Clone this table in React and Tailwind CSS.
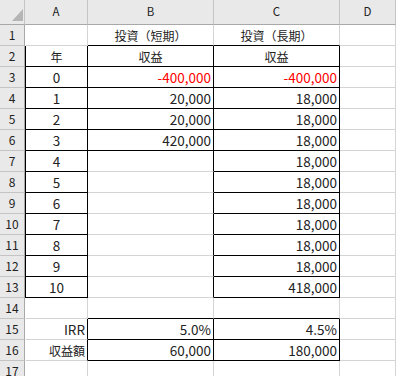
const GRID = "border-[#d4d4d4]";

// each row: [A, B, C]; a cell is { t, al, red, r, b, l, jp }
const rows = [
  [{}, { t: "投資（短期）", al: "c", b: 1, jp: 1 }, { t: "投資（長期）", al: "c", b: 1, jp: 1 }],
  [{ t: "年", al: "c", l: 1, r: 1, b: 1, jp: 1 }, { t: "収益", al: "c", r: 1, b: 1, jp: 1 }, { t: "収益", al: "c", r: 1, b: 1, jp: 1 }],
  [{ t: "0", al: "c", l: 1, r: 1, b: 1 }, { t: "-400,000", red: 1, r: 1, b: 1 }, { t: "-400,000", red: 1, r: 1, b: 1 }],
  [{ t: "1", al: "c", l: 1, r: 1, b: 1 }, { t: "20,000", r: 1, b: 1 }, { t: "18,000", r: 1, b: 1 }],
  [{ t: "2", al: "c", l: 1, r: 1, b: 1 }, { t: "20,000", r: 1, b: 1 }, { t: "18,000", r: 1, b: 1 }],
  [{ t: "3", al: "c", l: 1, r: 1, b: 1 }, { t: "420,000", r: 1, b: 1 }, { t: "18,000", r: 1, b: 1 }],
  [{ t: "4", al: "c", l: 1, r: 1, b: 1 }, { r: 1 }, { t: "18,000", r: 1, b: 1 }],
  [{ t: "5", al: "c", l: 1, r: 1, b: 1 }, { r: 1 }, { t: "18,000", r: 1, b: 1 }],
  [{ t: "6", al: "c", l: 1, r: 1, b: 1 }, { r: 1 }, { t: "18,000", r: 1, b: 1 }],
  [{ t: "7", al: "c", l: 1, r: 1, b: 1 }, { r: 1 }, { t: "18,000", r: 1, b: 1 }],
  [{ t: "8", al: "c", l: 1, r: 1, b: 1 }, { r: 1 }, { t: "18,000", r: 1, b: 1 }],
  [{ t: "9", al: "c", l: 1, r: 1, b: 1 }, { r: 1 }, { t: "18,000", r: 1, b: 1 }],
  [{ t: "10", al: "c", l: 1, r: 1, b: 1 }, { r: 1 }, { t: "418,000", r: 1, b: 1 }],
  [{}, { b: 1 }, { b: 1 }],
  [{ t: "IRR", r: 1 }, { t: "5.0%", r: 1, b: 1 }, { t: "4.5%", r: 1, b: 1 }],
  [{ t: "収益額", r: 1, jp: 1 }, { t: "60,000", r: 1, b: 1 }, { t: "180,000", r: 1, b: 1 }],
  [{}, {}, {}],
];

function Cell({ c, first }) {
  return (
    <div
      className={[
        "flex items-center overflow-hidden whitespace-nowrap bg-white border-r border-b pt-[1px]",
        first ? "border-l" : "",
        first ? (c.l ? "border-l-black" : "border-l-white") : "",
        c.r ? "border-r-black" : "border-r-[#d4d4d4]",
        c.b ? "border-b-black" : "border-b-[#d4d4d4]",
        c.al === "c" ? "justify-center" : "justify-end pr-[2px]",
        c.red ? "text-[#ff0000]" : "text-[#222]",
        c.jp ? "text-[12px]" : "",
      ].join(" ")}
    >
      {c.t}
    </div>
  );
}

export default function App() {
  return (
    <div className="h-[376px] w-[396px] overflow-hidden bg-white font-['Noto_Sans_CJK_JP',sans-serif] text-[13.5px] leading-none">
      <div className="grid grid-cols-[25px_63px_126px_126px_56px] grid-rows-[25px_repeat(17,21px)]">
        <div className="relative border-r border-b border-r-[#c4c4c4] border-b-[#a8a8a8] bg-[#e9e9e9]">
          <svg className="absolute left-[12px] top-[9px]" width="11" height="12" viewBox="0 0 11 12">
            <polygon points="11,0 11,12 0,12" fill="#b5b5b5" />
          </svg>
        </div>
        {["A", "B", "C", "D"].map((h) => (
          <div
            key={h}
            className="flex items-center justify-center border-r border-b border-r-[#c4c4c4] border-b-[#a8a8a8] bg-[#e9e9e9] text-[11.5px] text-[#222]"
          >
            {h}
          </div>
        ))}
        {rows.map((row, i) => (
          <div key={i} className="contents">
            <div className="flex items-center justify-center border-r border-b border-r-[#a8a8a8] border-b-[#c4c4c4] bg-[#e9e9e9] text-[12px] text-[#222]">
              {i + 1}
            </div>
            {row.map((c, j) => (
              <Cell key={j} c={c} first={j === 0} />
            ))}
            <div className={`border-r border-b bg-white ${GRID}`} />
          </div>
        ))}
      </div>
    </div>
  );
}
